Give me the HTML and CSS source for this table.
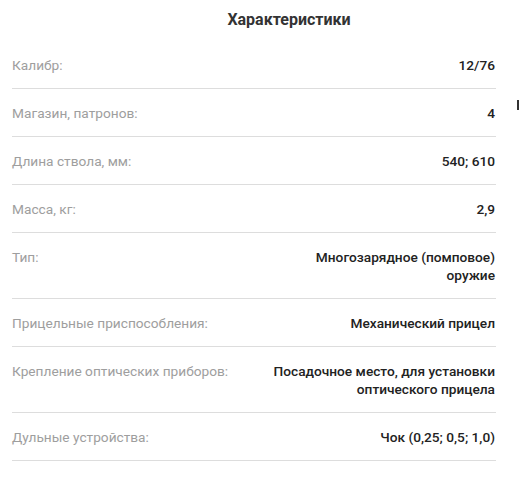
FILE: index.html
```html
<!DOCTYPE html>
<html lang="ru">
<head>
<meta charset="utf-8">
<link rel="stylesheet" href="styles.css">
</head>
<body>
<div class="specs">
  <h2 class="specs-title">Характеристики</h2>
  <div class="spec-list">
    <div class="spec-row"><span class="spec-label">Калибр:</span><span class="spec-value">12/76</span></div>
    <div class="spec-row"><span class="spec-label">Магазин, патронов:</span><span class="spec-value">4</span></div>
    <div class="spec-row"><span class="spec-label">Длина ствола, мм:</span><span class="spec-value">540; 610</span></div>
    <div class="spec-row"><span class="spec-label">Масса, кг:</span><span class="spec-value">2,9</span></div>
    <div class="spec-row"><span class="spec-label">Тип:</span><span class="spec-value">Многозарядное (помповое)<br>оружие</span></div>
    <div class="spec-row"><span class="spec-label">Прицельные приспособления:</span><span class="spec-value">Механический прицел</span></div>
    <div class="spec-row"><span class="spec-label">Крепление оптических приборов:</span><span class="spec-value">Посадочное место, для установки<br>оптического прицела</span></div>
    <div class="spec-row"><span class="spec-label">Дульные устройства:</span><span class="spec-value">Чок (0,25; 0,5; 1,0)</span></div>
  </div>
</div>
<div class="edge-mark"></div>
</body>
</html>
```
FILE: styles.css
```css
html, body {
  margin: 0;
  padding: 0;
  background: #ffffff;
}
body {
  font-family: Roboto, "Liberation Sans", sans-serif;
  position: relative;
  width: 519px;
  height: 477px;
  overflow: hidden;
}
.specs {
  padding: 0 23px 0 12px;
}
.specs-title {
  margin: 0;
  padding: 10px 0 0 70px;
  height: 41px;
  box-sizing: border-box;
  text-align: center;
  font-size: 16px;
  font-weight: 700;
  line-height: 20px;
  color: #333333;
}
.spec-list {
  display: flex;
  flex-direction: column;
}
.spec-row {
  display: flex;
  justify-content: space-between;
  align-items: flex-start;
  padding: 15px 0 14px;
  border-bottom: 1px solid #dddddd;
  font-size: 13.7px;
  line-height: 18px;
}
.spec-label {
  color: #9e9e9e;
}
.spec-value {
  color: #222222;
  font-weight: 500;
  text-align: right;
  padding-right: 1px;
}
.edge-mark {
  position: absolute;
  left: 517px;
  top: 100px;
  width: 2px;
  height: 10px;
  background: #333333;
}
```
